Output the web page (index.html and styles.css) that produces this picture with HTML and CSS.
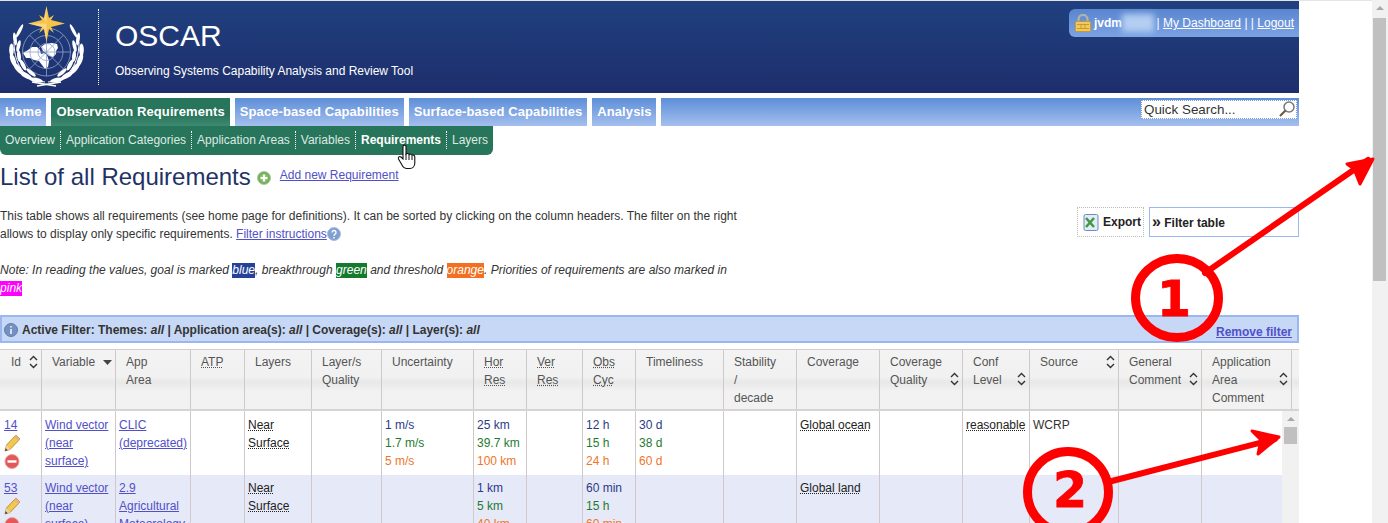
FILE: index.html
```html
<!DOCTYPE html>
<html lang="en">
<head>
<meta charset="utf-8">
<title>OSCAR - List of all Requirements</title>
<link rel="stylesheet" href="styles.css">
</head>
<body>
<div class="shell">
  <div class="page">
    <header class="banner">
      <svg class="logo" width="98" height="92" viewBox="0 1 98 92" aria-hidden="true">
        <defs>
          <g id="wreath" fill="#fff">
            <path d="M45 82C29 81 14 69 14 42" fill="none" stroke="#fff" stroke-width="1"/>
            <ellipse cx="11.500" cy="50" rx="2.300" ry="6.500"/>
            <ellipse cx="13" cy="60" rx="2.500" ry="6.500" transform="rotate(-20 13 60)"/>
            <ellipse cx="18" cy="68.500" rx="2.500" ry="7" transform="rotate(-38 18 68.500)"/>
            <ellipse cx="26" cy="75.500" rx="2.500" ry="7" transform="rotate(-58 26 75.500)"/>
            <ellipse cx="36" cy="80" rx="2.200" ry="7" transform="rotate(-78 36 80)"/>
            <ellipse cx="15" cy="39" rx="1.800" ry="6.500" transform="rotate(-8 15 39)"/>
            <ellipse cx="19.500" cy="31" rx="1.600" ry="7.500" transform="rotate(28 19.500 31)"/>
            <ellipse cx="18.500" cy="46" rx="1.800" ry="6" transform="rotate(14 18.500 46)"/>
            <ellipse cx="19" cy="56" rx="1.900" ry="6" transform="rotate(-6 19 56)"/>
            <ellipse cx="23" cy="65" rx="1.900" ry="6" transform="rotate(-28 23 65)"/>
            <ellipse cx="31" cy="72.500" rx="1.900" ry="6" transform="rotate(-50 31 72.500)"/>
            <path d="M32 82L56 86" stroke="#fff" stroke-width="1.500"/>
          </g>
        </defs>
        <use href="#wreath"/>
        <use href="#wreath" transform="translate(93 0) scale(-1 1)"/>
        <path fill="#fff" d="M23 53l5-3 4-3 5 0 3 3 1 4 3-1 3 2 2 6-1 6-3 2-3-4-3-4-5-1-4-2-4 0zM41 47l4-3 7-1 5 1 1 4-2 3 0 3-3 3-4-1-3-3-3-2z"/>
        <g fill="none" stroke="#8fa2cf" stroke-width=".8">
          <circle cx="46.500" cy="52" r="24"/>
          <circle cx="46.500" cy="52" r="16.500"/>
          <circle cx="46.500" cy="52" r="8.500"/>
          <path d="M22.500 52H70.500M46.500 28V76M29.500 35L63.500 69M63.500 35L29.500 69"/>
        </g>
        <path fill="#f6c24a" d="M46.500 6L49 18 54 15 51 20 65 23.500 51 27 54 33 49 29 46.500 42 44 29 39 33 42 27 28 23.500 42 20 39 15 44 18z"/>
        <path fill="#fff3c8" d="M46.500 6L46.500 42 44 29 42 27 28 23.500 46.500 23.500 44 18z" opacity=".45"/>
      </svg>
      <div class="brand">
        <div class="brand-name">OSCAR</div>
        <div class="brand-sub">Observing Systems Capability Analysis and Review Tool</div>
      </div>
      <div class="userbox">
        <svg class="lock" width="16" height="18" viewBox="0 0 16 18" aria-hidden="true">
          <path d="M3.500 8V5.500a4.500 4.500 0 0 1 9 0V8" fill="none" stroke="#b4b4a6" stroke-width="2.200"/>
          <rect x=".5" y="7.500" width="15" height="10" rx="1" fill="#f3c95a" stroke="#c79a2e"/>
          <path d="M2 10.500h12M2 14.500h12M6 10.500v4M10 10.500v4" stroke="#c49a3a" fill="none"/>
        </svg>
        <b class="username">jvdm</b><span class="blurred"></span>
        <span class="userlinks">| <a href="#">My Dashboard</a> | | <a href="#">Logout</a></span>
      </div>
    </header>

    <nav class="tabs">
      <a class="tab" href="#">Home</a>
      <a class="tab tab-active" href="#">Observation Requirements</a>
      <a class="tab" href="#">Space-based Capabilities</a>
      <a class="tab" href="#">Surface-based Capabilities</a>
      <a class="tab" href="#">Analysis</a>
      <div class="tab-fill">
        <div class="search">
          <span>Quick Search...</span>
          <svg width="18" height="18" viewBox="0 0 18 18" aria-hidden="true">
            <circle cx="11" cy="7" r="5" fill="#fff" stroke="#777" stroke-width="1.500"/>
            <path d="M7.500 10.500L2 16" stroke="#6b5a45" stroke-width="2.200"/>
          </svg>
        </div>
      </div>
    </nav>

    <nav class="subnav">
      <a href="#">Overview</a>
      <a href="#">Application Categories</a>
      <a href="#">Application Areas</a>
      <a href="#">Variables</a>
      <a class="sub-active" href="#">Requirements</a>
      <a href="#">Layers</a>
    </nav>

    <div class="title-row">
      <h1>List of all Requirements</h1>
      <svg class="plus" width="14" height="14" viewBox="0 0 14 14" aria-hidden="true">
        <circle cx="7" cy="7" r="6.500" fill="#74ad5c" stroke="#a8cf98"/>
        <circle cx="7" cy="7" r="4" fill="#8cc274"/>
        <path d="M7 3.500v7M3.500 7h7" stroke="#fff" stroke-width="2"/>
      </svg>
      <a class="add-link" href="#">Add new Requirement</a>
    </div>

    <section class="intro">
      <div class="intro-text">
        <p>This table shows all requirements (see home page for definitions). It can be sorted by clicking on the column headers. The filter on the right allows to display only specific requirements. <a href="#">Filter instructions</a><svg class="help" width="14" height="14" viewBox="0 0 14 14" aria-hidden="true"><circle cx="7" cy="7" r="6.500" fill="#7f9fd0" stroke="#a9bcdc"/><path d="M5 5.500a2 2 0 1 1 3 1.700c-.8.5-1 .8-1 1.600M7 10v1.500" fill="none" stroke="#fff" stroke-width="1.400"/></svg></p>
        <p class="note">Note: In reading the values, goal is marked <span class="mark-blue">blue</span>, breakthrough <span class="mark-green">green</span> and threshold <span class="mark-orange">orange</span>. Priorities of requirements are also marked in <span class="mark-pink">pink</span></p>
      </div>
      <div class="tools">
        <div class="export">
          <svg width="16" height="17" viewBox="0 0 16 17" aria-hidden="true">
            <rect x="1" y=".5" width="14" height="16" rx="1.500" fill="#e3ebf8" stroke="#6f8cc0"/>
            <path d="M3 4l8 9M11 4l-8 9" stroke="#3f9a3f" stroke-width="2.500"/>
          </svg>
          <span>Export</span>
        </div>
        <div class="filter-toggle"><b>»</b> Filter table</div>
      </div>
    </section>

    <div class="active-filter">
      <svg width="14" height="14" viewBox="0 0 14 14" aria-hidden="true"><circle cx="7" cy="7" r="6.500" fill="#7390c0" stroke="#5f7cb0"/><path d="M7 3v1.500M7 6v5" stroke="#dfe8f7" stroke-width="1.800"/></svg>
      <span class="filter-text">Active Filter: Themes: <i>all</i> | Application area(s): <i>all</i> | Coverage(s): <i>all</i> | Layer(s): <i>all</i></span>
      <a href="#">Remove filter</a>
    </div>

    <div class="table">
      <div class="thead cols">
        <div class="th"><span>Id</span><svg class="sort"><use href="#sort-icon"/></svg></div>
        <div class="th"><span>Variable</span><svg class="sort"><use href="#sort-down"/></svg></div>
        <div class="th"><span>App<br>Area</span></div>
        <div class="th"><span><abbr>ATP</abbr></span></div>
        <div class="th"><span>Layers</span></div>
        <div class="th"><span>Layer/s<br>Quality</span></div>
        <div class="th"><span>Uncertainty</span></div>
        <div class="th"><span><abbr>Hor</abbr><br><abbr>Res</abbr></span></div>
        <div class="th"><span><abbr>Ver</abbr><br><abbr>Res</abbr></span></div>
        <div class="th"><span><abbr>Obs</abbr><br><abbr>Cyc</abbr></span></div>
        <div class="th"><span>Timeliness</span></div>
        <div class="th"><span>Stability<br>/<br>decade</span></div>
        <div class="th"><span>Coverage</span></div>
        <div class="th"><span>Coverage<br>Quality</span><svg class="sort"><use href="#sort-icon"/></svg></div>
        <div class="th"><span>Conf<br>Level</span><svg class="sort"><use href="#sort-icon"/></svg></div>
        <div class="th th-start"><span>Source</span><svg class="sort"><use href="#sort-icon"/></svg></div>
        <div class="th"><span>General<br>Comment</span><svg class="sort"><use href="#sort-icon"/></svg></div>
        <div class="th"><span>Application<br>Area<br>Comment</span><svg class="sort"><use href="#sort-icon"/></svg></div>
        <div class="th th-end"></div>
      </div>
      <div class="tbody">
        <div class="rows">
          <div class="row cols">
            <div class="td td-id"><a href="#">14</a>
              <svg class="ico"><use href="#pencil"/></svg><svg class="ico"><use href="#minus"/></svg></div>
            <div class="td"><a href="#">Wind vector (near surface)</a></div>
            <div class="td"><a href="#">CLIC (deprecated)</a></div>
            <div class="td"></div>
            <div class="td"><abbr>Near Surface</abbr></div>
            <div class="td"></div>
            <div class="td"><div class="goal">1 m/s</div><div class="brk">1.7 m/s</div><div class="thr">5 m/s</div></div>
            <div class="td"><div class="goal">25 km</div><div class="brk">39.7 km</div><div class="thr">100 km</div></div>
            <div class="td"></div>
            <div class="td"><div class="goal">12 h</div><div class="brk">15 h</div><div class="thr">24 h</div></div>
            <div class="td"><div class="goal">30 d</div><div class="brk">38 d</div><div class="thr">60 d</div></div>
            <div class="td"></div>
            <div class="td"><abbr>Global ocean</abbr></div>
            <div class="td"></div>
            <div class="td"><abbr>reasonable</abbr></div>
            <div class="td">WCRP</div>
            <div class="td"></div>
            <div class="td"></div>
          </div>
          <div class="row row-alt cols">
            <div class="td td-id"><a href="#">53</a>
              <svg class="ico"><use href="#pencil"/></svg><svg class="ico"><use href="#minus"/></svg></div>
            <div class="td"><a href="#">Wind vector (near surface)</a></div>
            <div class="td"><a href="#">2.9 Agricultural Meteorology</a></div>
            <div class="td"></div>
            <div class="td"><abbr>Near Surface</abbr></div>
            <div class="td"></div>
            <div class="td"></div>
            <div class="td"><div class="goal">1 km</div><div class="brk">5 km</div><div class="thr">40 km</div></div>
            <div class="td"></div>
            <div class="td"><div class="goal">60 min</div><div class="brk">15 h</div><div class="thr">60 min</div></div>
            <div class="td"></div>
            <div class="td"></div>
            <div class="td"><abbr>Global land</abbr></div>
            <div class="td"></div>
            <div class="td"></div>
            <div class="td"></div>
            <div class="td"></div>
            <div class="td"></div>
          </div>
        </div>
        <div class="vscroll vscroll-inner"><i class="up"></i><i class="thumb"></i></div>
      </div>
    </div>
  </div>
  <div class="vscroll vscroll-page"><i class="up"></i><i class="thumb"></i></div>
</div>

<svg class="defs" width="0" height="0" aria-hidden="true">
  <defs>
    <symbol id="sort-icon" viewBox="0 0 9 14"><path d="M1 5L4.500 1.500 8 5M1 9L4.500 12.500 8 9" fill="none" stroke="#333" stroke-width="1.400"/></symbol>
    <symbol id="sort-down" viewBox="0 0 9 14"><path d="M0 5H9L4.500 10z" fill="#444"/></symbol>
    <symbol id="pencil" viewBox="0 0 16 18">
      <path d="M12 1L16 5 6 15.500 1 17 2.500 11z" fill="#f2c84e" stroke="#a8802a" stroke-width=".8"/>
      <path d="M12 1L16 5 14 7.100 10 3.100z" fill="#e8b27a"/>
      <path d="M1 17L2.500 11 6 15.500z" fill="#e9d3a8"/>
      <path d="M1 17L1.700 14.200 3.700 16.300z" fill="#4a3420"/>
    </symbol>
    <symbol id="minus" viewBox="0 0 16 18">
      <circle cx="8" cy="9.500" r="7" fill="#e2595a" stroke="#f0a0a0"/>
      <path d="M3.500 9.500h9" stroke="#fff" stroke-width="2.400"/>
    </symbol>
  </defs>
</svg>

<svg class="cursor" width="20" height="26" viewBox="0 0 20 26" aria-hidden="true">
  <path d="M6 2c1-1.500 3-1 3 .5V10c1-1 2.500-.5 3 .5 1-.8 2.500-.3 3 .8 1-.5 2.800 0 2.800 1.700V19c0 3-2 5.500-5 5.500H10c-2.500 0-4-1.500-5-3.500L1.500 15c-.8-2 1-3 2.500-2l2 2z" fill="#fff" stroke="#111" stroke-width="1.100"/>
  <path d="M9 10v6M12 11v5M15 12v4" stroke="#111" fill="none"/>
</svg>

<svg class="annot" width="1388" height="523" viewBox="0 0 1388 523">
  <g fill="none" stroke="#f00" stroke-linecap="round" stroke-linejoin="round">
    <ellipse cx="1177" cy="298" rx="41.500" ry="39.500" stroke-width="9"/>
    <ellipse cx="1068" cy="492" rx="40.500" ry="40.500" stroke-width="9"/>
    <path d="M1205 273L1368 160" stroke-width="6"/>
    <path d="M1112 481L1275 439" stroke-width="6"/>
  </g>
  <path fill="#f00" stroke="#f00" stroke-width="3" stroke-linejoin="round" d="M1373 159L1347 164 1354 169 1360 184z"/>
  <path fill="#f00" stroke="#f00" stroke-width="3" stroke-linejoin="round" d="M1279 437L1252 431 1261 440 1258 454z"/>
  <text class="digit" x="1174" y="316">1</text>
  <text class="digit" x="1070" y="507">2</text>
</svg>
</body>
</html>
```
FILE: styles.css
```css
* { box-sizing: border-box; }
html, body { margin: 0; height: 523px; overflow: hidden; background: #fff; }
body {
  position: relative;
  font: 12px/18px "Liberation Sans", Arial, sans-serif;
  color: #333;
}
p { margin: 0; }
a { color: #5150c9; }

.shell { display: flex; justify-content: space-between; height: 523px; padding-top: 1px; box-shadow: inset 0 1px 0 #e4e4e4; }
.page { width: 1299px; flex: none; }

/* Banner */
.banner {
  display: flex;
  height: 92px;
  background: linear-gradient(#20407f, #1e2e6c);
  color: #fff;
}
.logo { flex: none; display: block; }
.brand {
  margin-top: 8px;
  height: 76px;
  padding: 11px 0 0 16px;
  border-left: 1px dotted #fff;
  flex: 1;
}
.brand-name { font-size: 30px; line-height: 32px; }
.brand-sub { margin-top: 10px; font-size: 12px; line-height: 18px; letter-spacing: -.01px; }
.userbox {
  display: flex;
  align-items: center;
  flex: none;
  width: 230px;
  height: 28px;
  margin-top: 8px;
  padding: 0 5px 0 6px;
  border-radius: 6px 0 0 6px;
  background: linear-gradient(#5a86cf, #7ba2e4);
  white-space: pre;
}
.lock { flex: none; margin-right: 3px; }
.username { font-weight: bold; }
.blurred { width: 32px; height: 18px; background: #b4cef2; filter: blur(3px); flex: none; }
.userlinks { margin-left: auto; }
.userlinks a { color: #fff; }

/* Main tabs */
.tabs { display: flex; gap: 5px; height: 28px; margin-top: 5px; }
.tab {
  padding: 5px 5px 0 5px;
  font-size: 13px;
  line-height: 18px;
  font-weight: bold;
  letter-spacing: .09px;
  color: #fff;
  text-decoration: none;
  white-space: nowrap;
  background: linear-gradient(#5d8ed8, #a4bfee);
}
.tab-active { background: linear-gradient(#27755a, #27755a 60%, #3e8a72); }
.tab-fill {
  flex: 1;
  display: flex;
  justify-content: flex-end;
  padding: 2px 2px 0 0;
  background: linear-gradient(#5d8ed8, #a4bfee);
}
.search {
  width: 156px;
  height: 19px;
  display: flex;
  align-items: center;
  justify-content: space-between;
  padding: 0 0 0 2px;
  background: #fff;
  border: 1px dotted #7f9fdc;
  font-size: 13.400px;
}
.search svg { flex: none; margin-top: -1px; }

/* Sub navigation */
.subnav {
  display: flex;
  align-items: center;
  width: 493px;
  height: 29px;
  padding-bottom: 1px;
  background: #27755a;
  border-radius: 0 0 6px 6px;
}
.subnav a {
  padding: 0 5px;
  color: #dfe9e4;
  text-decoration: none;
  white-space: nowrap;
  border-right: 1px dotted #fff;
}
.subnav a:last-child { border-right: 0; }
.subnav .sub-active { font-weight: bold; color: #fff; }

/* Title */
.title-row { display: flex; align-items: center; height: 30px; margin-top: 7px; }
h1 { margin: 0; font-size: 24px; line-height: 30px; font-weight: normal; color: #1f3366; white-space: nowrap; }
.plus { margin: 1px 0 0 6px; flex: none; }
.add-link { margin: -5px 0 0 9px; }

/* Intro */
.intro { display: flex; justify-content: space-between; margin-top: 15px; }
.intro-text { width: 745px; }
.help { vertical-align: -3px; }
.note { margin-top: 18px; font-style: italic; letter-spacing: .018px; }
.mark-blue, .mark-green, .mark-orange, .mark-pink { color: #fff; padding: 0 0 1px; }
.mark-blue { background: #25429a; }
.mark-green { background: #147a2e; }
.mark-orange { background: #f37021; }
.mark-pink { background: #f0f; }
.tools { display: flex; gap: 5px; height: 30px; }
.export {
  display: flex;
  align-items: center;
  gap: 4px;
  width: 67px;
  padding-left: 5px;
  border: 1px dotted #bbb;
  font-weight: bold;
  color: #222;
}
.filter-toggle {
  width: 150px;
  padding: 5px 0 0 2px;
  border: 1px solid #9ab8ef;
  font-weight: bold;
  color: #222;
}
.filter-toggle b { font-size: 16px; }

/* Active filter */
.active-filter {
  display: flex;
  align-items: center;
  height: 28px;
  margin-top: 18px;
  padding: 2px 5px 0 2px;
  border: 2px solid #9ab8ef;
  background: #c6d8f6;
  font-weight: bold;
}
.filter-text { margin-left: 4px; flex: 1; }
.active-filter a { align-self: flex-end; line-height: 18px; }

/* Table */
.table { margin-top: 6px; }
.cols {
  display: grid;
  grid-template-columns: 41px 74px 75px 54px 67px 70px 92px 53px 56px 53px 88px 73px 83px 83px 67px 89px 83px 90px 8px;
}
.thead { border-top: 1px solid #d6cdcd; border-bottom: 2px solid #d6d3d3; height: 62px; background: linear-gradient(#f3f3f3, #f1f1f1 45%, #e8e8e8 55%, #f2f2f2 70%); color: #555; }
.th {
  display: flex;
  align-items: center;
  align-self: stretch;
  justify-content: space-between;
  padding: 3px 3px 2px 10px;
  border-left: 1px solid #d0c8c8;
}
.th:first-child { border-left: 0; padding-left: 11px; }
.th > span { align-self: flex-start; }
.th-end { padding: 0; }
.sort { width: 9px; height: 14px; flex: none; margin-top: -2px; }
.th:nth-child(1) .sort, .th:nth-child(2) .sort, .th-start .sort { align-self: flex-start; margin-top: 2px; }
abbr { text-decoration: underline dotted; }
.tbody { display: flex; height: 112px; overflow: hidden; }
.rows { width: 1282px; flex: none; }
.row { min-height: 63px; grid-template-columns: 41px 74px 75px 54px 67px 70px 92px 53px 56px 53px 88px 73px 83px 83px 67px 89px 83px 81px; }
.row-alt { background: #e6e9f7; }
.row-alt .td { padding-top: 4px; }
.td { padding: 5px 3px 5px 3px; border-left: 1px solid #d0c8c8; }
.td:first-child { border-left: 0; padding-left: 4px; }
.td abbr { color: #222; }
.td-id a { display: block; }
.ico { display: block; width: 16px; height: 18px; }
.goal { color: #2c3a86; }
.brk { color: #1f7a30; }
.thr { color: #f0752a; }

/* Scrollbars */
.vscroll { flex: none; width: 17px; background: #f1f1f1; display: flex; flex-direction: column; align-items: center; }
.vscroll-page { width: 16px; margin-top: -1px; }
.up { display: block; width: 0; height: 0; margin-top: 6px; border: 4px solid transparent; border-top: 0; border-bottom: 4px solid #a8a8a8; }
.thumb { display: block; background: #c0c0c0; }
.vscroll-inner .thumb { width: 13px; height: 17px; margin-top: 6px; }
.vscroll-page .thumb { width: 13px; height: 263px; margin-top: 8px; align-self: flex-start; margin-left: 1px; }

/* Overlays */
.defs { position: absolute; }
.cursor { position: absolute; left: 397px; top: 144px; }
.annot { position: absolute; left: 0; top: 0; pointer-events: none; }
.digit { font: bold 49px "DejaVu Sans", sans-serif; fill: #f00; stroke: #f00; stroke-width: .8px; text-anchor: middle; }
```
